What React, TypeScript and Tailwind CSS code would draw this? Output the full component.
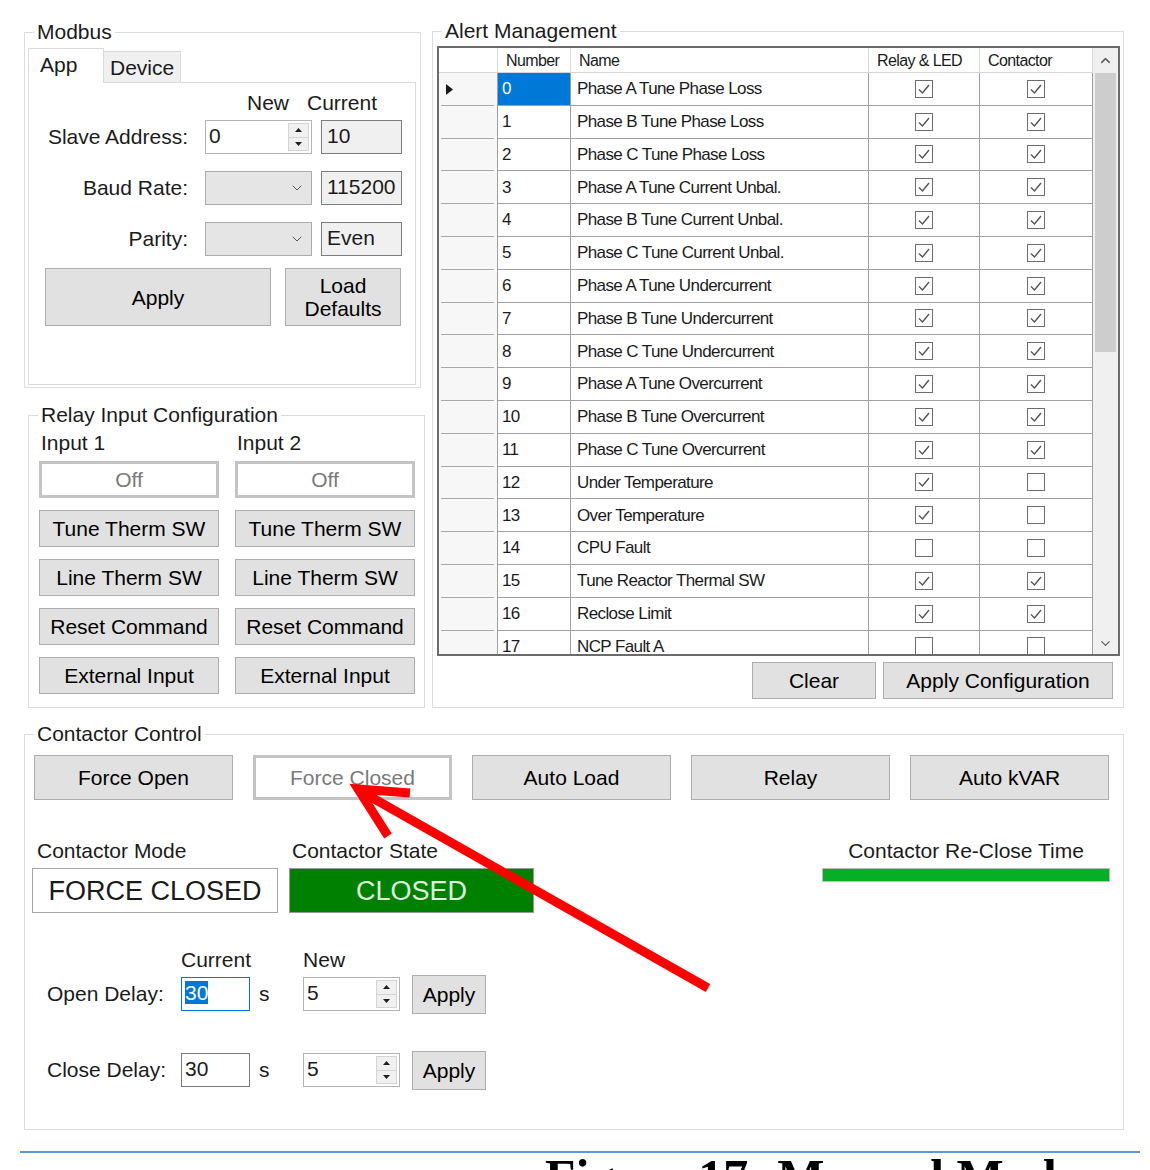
import { ChevronDown, ChevronUp } from "lucide-react";
import type { ReactNode } from "react";

type AlertRow = { name: string; relay: boolean; contactor: boolean };

const alerts: AlertRow[] = [
  { name: "Phase A Tune Phase Loss", relay: true, contactor: true },
  { name: "Phase B Tune Phase Loss", relay: true, contactor: true },
  { name: "Phase C Tune Phase Loss", relay: true, contactor: true },
  { name: "Phase A Tune Current Unbal.", relay: true, contactor: true },
  { name: "Phase B Tune Current Unbal.", relay: true, contactor: true },
  { name: "Phase C Tune Current Unbal.", relay: true, contactor: true },
  { name: "Phase A Tune Undercurrent", relay: true, contactor: true },
  { name: "Phase B Tune Undercurrent", relay: true, contactor: true },
  { name: "Phase C Tune Undercurrent", relay: true, contactor: true },
  { name: "Phase A Tune Overcurrent", relay: true, contactor: true },
  { name: "Phase B Tune Overcurrent", relay: true, contactor: true },
  { name: "Phase C Tune Overcurrent", relay: true, contactor: true },
  { name: "Under Temperature", relay: true, contactor: false },
  { name: "Over Temperature", relay: true, contactor: false },
  { name: "CPU Fault", relay: false, contactor: false },
  { name: "Tune Reactor Thermal SW", relay: true, contactor: true },
  { name: "Reclose Limit", relay: true, contactor: true },
  { name: "NCP Fault A", relay: false, contactor: false },
];

const inputModes = ["Tune Therm SW", "Line Therm SW", "Reset Command", "External Input"];
const contactorModes = ["Force Open", "Force Closed", "Auto Load", "Relay", "Auto kVAR"];

function GroupBox({ title, className = "", children }: { title: string; className?: string; children: ReactNode }) {
  return (
    <fieldset className={`min-w-0 border border-[#dcdcdc] ${className}`}>
      <legend className="ml-[9px] px-[3px] text-[21px] leading-[22px]">{title}</legend>
      {children}
    </fieldset>
  );
}

function Button({ children, active = false, className = "" }: { children: ReactNode; active?: boolean; className?: string }) {
  const look = active
    ? "border-[3px] border-[#c4c4c4] bg-white text-[#7a7a7a]"
    : "border border-[#adadad] bg-[#e1e1e1] text-black";
  return (
    <button className={`flex items-center justify-center text-[21px] leading-[23px] ${look} ${className}`}>
      {children}
    </button>
  );
}

function Spinner() {
  return (
    <div className="my-[2px] mr-[2px] flex w-[21px] flex-col border border-[#d4d4d4]">
      <div className="flex flex-1 items-center justify-center border-b border-[#d4d4d4] bg-[#f0f0f0]">
        <svg width="7" height="4" viewBox="0 0 7 4">
          <path d="M0 4L3.5 0L7 4Z" fill="#1f1f1f" />
        </svg>
      </div>
      <div className="flex flex-1 items-center justify-center bg-[#f0f0f0]">
        <svg width="7" height="4" viewBox="0 0 7 4">
          <path d="M0 0L3.5 4L7 0Z" fill="#1f1f1f" />
        </svg>
      </div>
    </div>
  );
}

function NumericBox({ value, className = "" }: { value: string; className?: string }) {
  return (
    <div className={`flex border border-[#b4b4b4] bg-white ${className}`}>
      <span className="flex-1 pl-[3px] text-[21px] leading-[30px]">{value}</span>
      <Spinner />
    </div>
  );
}

function ComboBox() {
  return (
    <div className="flex h-[34px] w-[107px] items-center justify-end border border-[#acacac] bg-[#e5e5e5] pr-[6px]">
      <ChevronDown size={16} strokeWidth={1.5} className="text-[#555]" />
    </div>
  );
}

function ReadBox({ value }: { value: string }) {
  return (
    <div className="ml-[9px] h-[34px] w-[81px] border border-[#7d7d7d] bg-[#f0f0f0] pl-[5px] text-[21px] leading-[30px]">
      {value}
    </div>
  );
}

function GridCheck({ checked }: { checked: boolean }) {
  return (
    <svg width="18" height="18" viewBox="0 0 18 18">
      <rect x="0.5" y="0.5" width="17" height="17" fill="white" stroke="#6d6d6d" />
      {checked && <path d="M4 9.5L7.5 13L14 5" fill="none" stroke="#555" strokeWidth="1.4" />}
    </svg>
  );
}

function ModbusPanel() {
  const rows: { label: string; field: ReactNode; current: string }[] = [
    { label: "Slave Address:", field: <NumericBox value="0" className="h-[34px] w-[107px]" />, current: "10" },
    { label: "Baud Rate:", field: <ComboBox />, current: "115200" },
    { label: "Parity:", field: <ComboBox />, current: "Even" },
  ];
  return (
    <GroupBox title="Modbus" className="mt-[21px] h-[367px] w-[397px]">
      <div className="ml-[3px] mt-[5px] w-[388px]">
        <div className="flex h-[34px] items-end">
          <div className="relative z-10 -mb-px h-[35px] w-[76px] border border-b-0 border-[#d9d9d9] bg-white pl-[11px] pt-[4px] text-[21px] leading-[23px]">
            App
          </div>
          <div className="h-[31px] w-[77px] border border-b-0 border-l-0 border-[#d9d9d9] bg-[#f0f0f0] pl-[6px] pt-[4px] text-[21px] leading-[23px]">
            Device
          </div>
        </div>
        <div className="h-[303px] border border-[#d9d9d9] bg-white pt-[9px]">
          <div className="flex h-[22px] text-[21px] leading-[22px]">
            <span className="ml-[218px]">New</span>
            <span className="ml-[18px]">Current</span>
          </div>
          {rows.map((r, i) => (
            <div key={r.label} className={`flex h-[34px] items-center ${i === 0 ? "mt-[6px]" : "mt-[17px]"}`}>
              <span className="w-[159px] text-right text-[21px] leading-[22px]">{r.label}</span>
              <div className="ml-[17px]">{r.field}</div>
              <ReadBox value={r.current} />
            </div>
          ))}
          <div className="mt-[12px] flex pl-[16px]">
            <Button className="h-[58px] w-[226px]">Apply</Button>
            <Button className="ml-[14px] h-[58px] w-[116px] flex-col">
              <span>Load</span>
              <span>Defaults</span>
            </Button>
          </div>
        </div>
      </div>
    </GroupBox>
  );
}

function RelayInputPanel() {
  return (
    <GroupBox title="Relay Input Configuration" className="ml-[4px] mt-[16px] h-[304px] w-[397px]">
      <div className="mt-[6px] flex gap-[16px] pl-[10px]">
        {["Input 1", "Input 2"].map((input) => (
          <div key={input} className="flex w-[180px] flex-col">
            <span className="pl-[2px] text-[21px] leading-[22px]">{input}</span>
            <Button active className="mt-[7px] h-[37px] w-[180px]">
              Off
            </Button>
            {inputModes.map((m) => (
              <Button key={m} className="mt-[12px] h-[37px] w-[180px]">
                {m}
              </Button>
            ))}
          </div>
        ))}
      </div>
    </GroupBox>
  );
}

function AlertGrid() {
  const cols = [
    { title: "", w: "w-[59px]" },
    { title: "Number", w: "w-[73px]" },
    { title: "Name", w: "w-[298px]" },
    { title: "Relay & LED", w: "w-[111px]" },
    { title: "Contactor", w: "w-[113px]" },
  ];
  return (
    <div className="ml-[4px] mt-[4px] flex h-[610px] w-[683px] overflow-hidden border-2 border-[#6b6b6b] bg-white">
      <div className="flex min-w-0 flex-1 flex-col tracking-[-0.6px]">
        <div className="flex h-[25px] shrink-0 border-b border-[#d6d6d6]">
          {cols.map((c) => (
            <div key={c.title || "corner"} className={`${c.w} border-r border-[#dadada] pl-[8px] text-[16px] leading-[25px]`}>
              {c.title}
            </div>
          ))}
        </div>
        <div className="flex-1 overflow-hidden">
          {alerts.map((a, i) => (
            <div key={i} className="flex h-[32.8px] text-[17px]">
              <div className="relative flex w-[59px] items-center border-r border-[#a0a0a0] bg-[#f7f7f7] pl-[7px]">
                {i === 0 && (
                  <svg width="7" height="11" viewBox="0 0 7 11">
                    <path d="M0 0L7 5.5L0 11Z" fill="#1a1a1a" />
                  </svg>
                )}
                <div className="absolute bottom-0 left-[2px] right-[3px] h-px bg-[#a8a8a8]" />
              </div>
              <div
                className={`flex w-[73px] items-center border-b border-r border-[#a0a0a0] pl-[4px] ${
                  i === 0 ? "bg-[#0078d7] text-white" : ""
                }`}
              >
                {i}
              </div>
              <div className="flex w-[298px] items-center border-b border-r border-[#a0a0a0] pl-[6px]">{a.name}</div>
              <div className="flex w-[111px] items-center justify-center border-b border-r border-[#a0a0a0]">
                <GridCheck checked={a.relay} />
              </div>
              <div className="flex w-[113px] items-center justify-center border-b border-r border-[#a0a0a0]">
                <GridCheck checked={a.contactor} />
              </div>
            </div>
          ))}
        </div>
      </div>
      <div className="flex w-[25px] flex-col bg-[#f0f0f0]">
        <div className="flex h-[25px] items-center justify-center">
          <ChevronUp size={15} strokeWidth={2.5} className="text-[#606060]" />
        </div>
        <div className="mx-[2px] h-[279px] bg-[#cdcdcd]" />
        <div className="flex-1" />
        <div className="flex h-[22px] items-center justify-center">
          <ChevronDown size={15} strokeWidth={2} className="text-[#606060]" />
        </div>
      </div>
    </div>
  );
}

function AlertPanel() {
  return (
    <GroupBox title="Alert Management" className="mt-[20px] h-[688px] w-[692px]">
      <AlertGrid />
      <div className="mr-[10px] mt-[6px] flex justify-end gap-[7px]">
        <Button className="h-[37px] w-[124px]">Clear</Button>
        <Button className="h-[37px] w-[230px]">Apply Configuration</Button>
      </div>
    </GroupBox>
  );
}

function DelayRow({ label, focused, className = "" }: { label: string; focused: boolean; className?: string }) {
  return (
    <div className={`flex h-[40px] items-center pl-[22px] ${className}`}>
      <span className="w-[134px] text-[21px] leading-[22px]">{label}</span>
      <div
        className={`h-[34px] w-[69px] border bg-white pl-[3px] text-[21px] leading-[30px] ${
          focused ? "border-[#0078d7]" : "border-[#7a7a7a]"
        }`}
      >
        {focused ? <span className="bg-[#0078d7] text-white">30</span> : "30"}
      </div>
      <span className="w-[53px] pl-[9px] text-[21px] leading-[22px]">s</span>
      <NumericBox value="5" className="h-[34px] w-[97px]" />
      <Button className="ml-[12px] h-[39px] w-[74px]">Apply</Button>
    </div>
  );
}

function ContactorPanel() {
  return (
    <GroupBox title="Contactor Control" className="ml-[24px] mt-[15px] h-[407px] w-[1100px]">
      <div className="mt-[10px] flex gap-[20px] pl-[9px]">
        {contactorModes.map((m) => (
          <Button key={m} active={m === "Force Closed"} className="h-[45px] w-[199px]">
            {m}
          </Button>
        ))}
      </div>
      <div className="mt-[40px] flex text-[21px] leading-[22px]">
        <div className="ml-[7px] w-[246px]">
          <div className="pl-[5px]">Contactor Mode</div>
          <div className="mt-[6px] flex h-[45px] items-center justify-center border border-[#a6a6a6] bg-white text-[27px]">
            FORCE CLOSED
          </div>
        </div>
        <div className="ml-[11px] w-[245px]">
          <div className="pl-[3px]">Contactor State</div>
          <div className="mt-[6px] flex h-[45px] items-center justify-center border border-[#9a9a9a] bg-[#008000] text-[27px] text-[#dff5df]">
            CLOSED
          </div>
        </div>
        <div className="ml-[288px] w-[288px]">
          <div className="text-center">Contactor Re-Close Time</div>
          <div className="mt-[6px] h-[14px] border border-[#bcbcbc] bg-[#06b025]" />
        </div>
      </div>
      <div className="mt-[36px] flex h-[22px] text-[21px] leading-[22px]">
        <span className="ml-[156px]">Current</span>
        <span className="ml-[52px]">New</span>
      </div>
      <DelayRow label="Open Delay:" focused className="mt-[3px]" />
      <DelayRow label="Close Delay:" focused={false} className="mt-[36px]" />
    </GroupBox>
  );
}

export default function App() {
  return (
    <div className="relative h-[1170px] w-[1150px] overflow-hidden bg-white font-['Liberation_Sans',Arial,sans-serif] text-[#1b1b1b]">
      <div className="flex items-start pl-[24px]">
        <div className="flex w-[401px] flex-col">
          <ModbusPanel />
          <RelayInputPanel />
        </div>
        <div className="ml-[7px]">
          <AlertPanel />
        </div>
      </div>
      <ContactorPanel />
      <div className="ml-[20px] mt-[21px] h-[2px] w-[1120px] bg-[#5b9bd5]" />
      <div className="ml-[545px] -mt-px whitespace-nowrap font-['Liberation_Serif',serif] text-[50px] font-bold leading-[50px] text-black">
        Figure 17: Manual Mode
      </div>

      {/* red callout arrow pointing at the Force Closed button */}
      <svg className="pointer-events-none absolute left-0 top-0" width="1150" height="1170" viewBox="0 0 1150 1170">
        <g stroke="#ff0000" strokeWidth="9" fill="none">
          <line x1="708" y1="988" x2="362" y2="792" />
          <polyline points="410,793 358,789 388,836" strokeLinejoin="miter" />
        </g>
      </svg>
    </div>
  );
}
